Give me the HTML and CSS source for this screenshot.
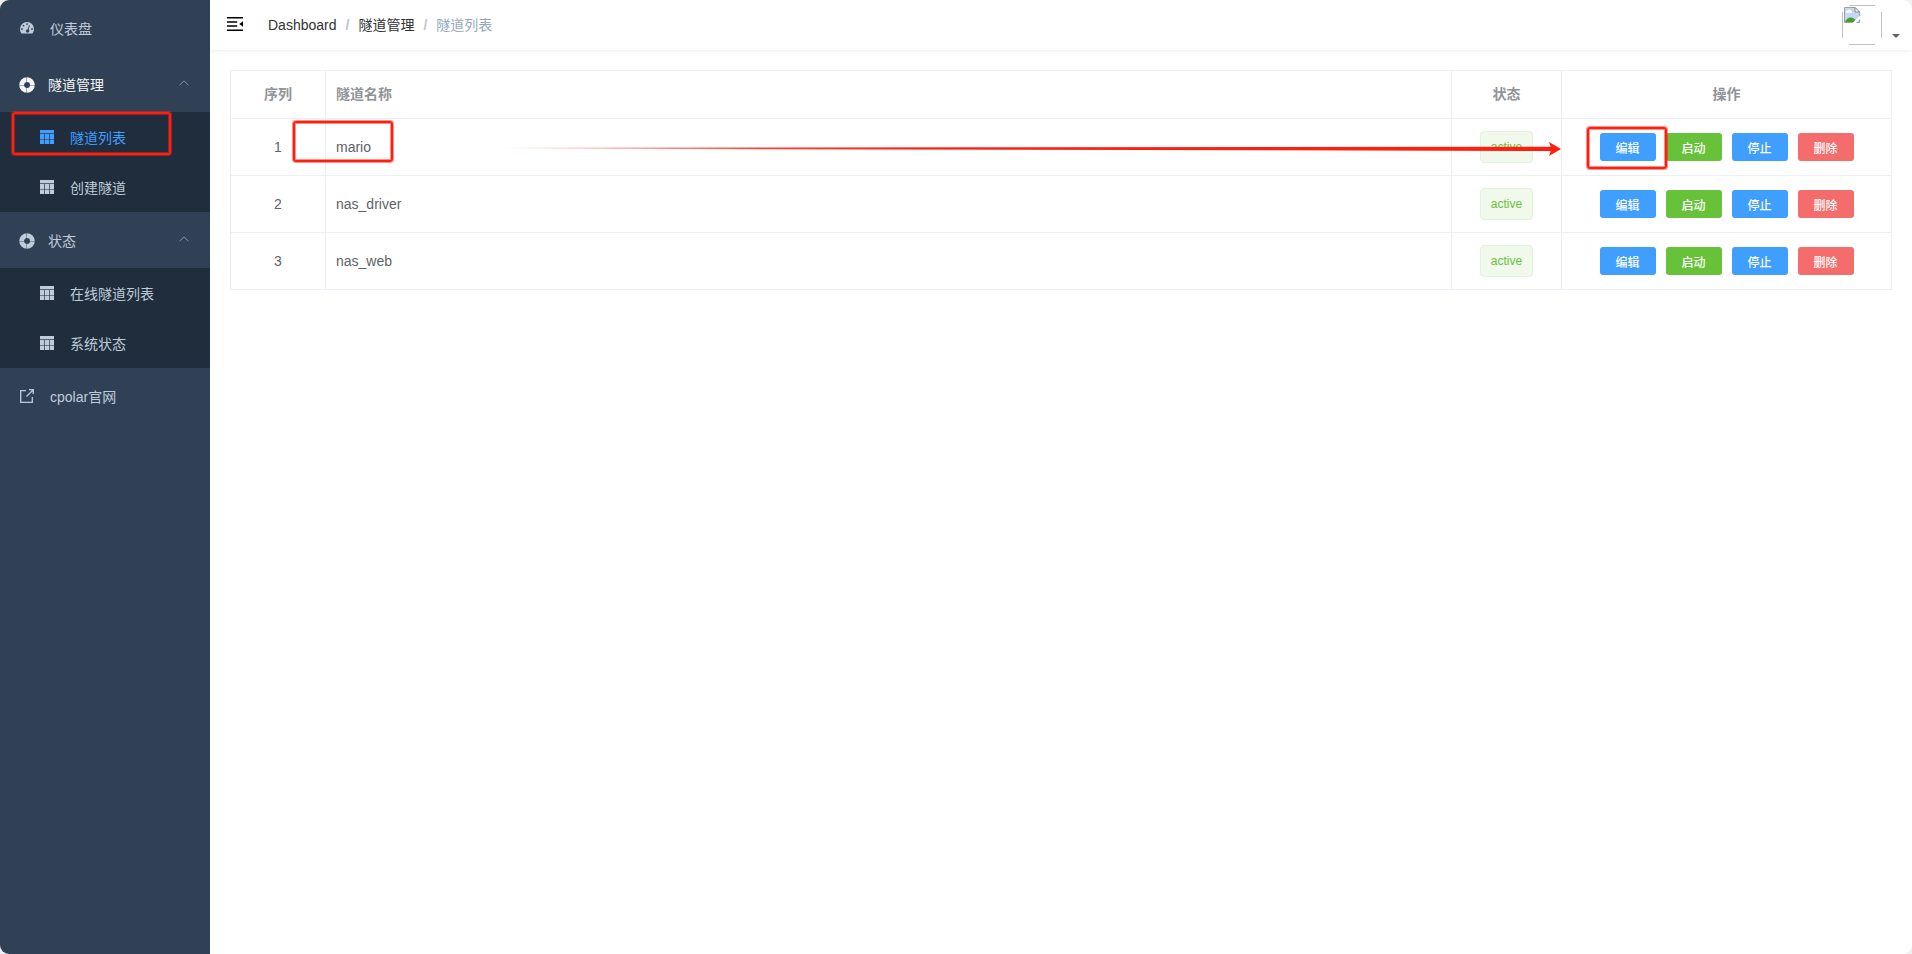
FILE: index.html
```
<!DOCTYPE html>
<html lang="zh-CN">
  <head>
    <meta charset="UTF-8" />
    <meta name="viewport" content="width=device-width, initial-scale=1.0" />
    <title>隧道列表</title>
    <link rel="stylesheet" href="styles.css" />
  </head>
  <body>
    <!-- shared icons -->
    <svg width="0" height="0" class="sprite">
      <symbol id="icon-table" viewBox="0 0 14 14">
        <path d="M0 0h14v14H0z" />
        <path d="M0 3.500h14M4.500 4v10M9.500 4v10" stroke="#1f2d3d" opacity=".65" />
        <path d="M0 9.500h14" stroke="#1f2d3d" opacity=".5" />
      </symbol>
      <symbol id="icon-ring" viewBox="0 0 16 16">
        <circle cx="8" cy="8" r="5.400" fill="none" stroke="currentColor" stroke-width="4.800" />
        <path d="M7.500 0v5M7.500 11v5M0 8.500h5M11 8.500h5" stroke="#304156" opacity=".4" />
      </symbol>
      <symbol id="icon-up" viewBox="0 0 12 12">
        <path d="M1.500 8.300 6 3.800l4.500 4.500" fill="none" stroke="currentColor" />
      </symbol>
    </svg>

    <div class="app">
      <aside class="sidebar">
        <div class="menu-item">
          <svg class="icon" viewBox="0 0 14 12">
            <path fill-rule="evenodd" d="M7 0a7 7 0 0 0-7 7c0 1.500.4 2.900 1.200 4.100.1.200.3.300.5.300h10.600c.2 0 .4-.1.5-.3A7.400 7.400 0 0 0 14 7a7 7 0 0 0-7-7zM7 1.200a.9.900 0 1 1 0 1.800.9.900 0 0 1 0-1.800zM3.500 2.700a.9.900 0 1 1 0 1.800.9.900 0 0 1 0-1.800zM2 6.100a.9.900 0 1 1 0 1.800.9.900 0 0 1 0-1.800zM12 6.100a.9.900 0 1 1 0 1.800.9.900 0 0 1 0-1.800zM9.100 3.100l.8.300-1.300 4.200a1.700 1.700 0 1 1-.9-.3z" />
          </svg>
          <span>仪表盘</span>
        </div>
        <div class="submenu-title open">
          <svg class="icon-ring"><use href="#icon-ring" /></svg>
          <span>隧道管理</span>
          <svg class="arrow"><use href="#icon-up" /></svg>
        </div>
        <div class="submenu">
          <div class="submenu-item active">
            <svg class="icon"><use href="#icon-table" /></svg>
            <span>隧道列表</span>
          </div>
          <div class="submenu-item">
            <svg class="icon"><use href="#icon-table" /></svg>
            <span>创建隧道</span>
          </div>
        </div>
        <div class="submenu-title">
          <svg class="icon-ring"><use href="#icon-ring" /></svg>
          <span>状态</span>
          <svg class="arrow"><use href="#icon-up" /></svg>
        </div>
        <div class="submenu">
          <div class="submenu-item">
            <svg class="icon"><use href="#icon-table" /></svg>
            <span>在线隧道列表</span>
          </div>
          <div class="submenu-item">
            <svg class="icon"><use href="#icon-table" /></svg>
            <span>系统状态</span>
          </div>
        </div>
        <div class="menu-item">
          <svg class="icon" viewBox="0 0 14 14">
            <path d="M6 1.700H.7v11.600h11.600V8M6.500 7.500l6.300-6.300M9 .7h4.300V5" fill="none" stroke="currentColor" stroke-width="1.300" />
          </svg>
          <span>cpolar官网</span>
        </div>
      </aside>

      <div class="main">
        <header class="navbar">
          <svg class="hamburger" viewBox="0 0 16 14">
            <path d="M0 0h16v1.500H0zM0 4.200h10.200v1.500H0zM0 8.300h10.200v1.500H0zM0 12.500h16V14H0zM16 4.300v5.400L12.300 7z" />
          </svg>
          <div class="breadcrumb">
            <a>Dashboard</a><i>/</i><a>隧道管理</a><i>/</i><span>隧道列表</span>
          </div>
          <div class="user">
            <!-- avatar that failed to load -->
            <svg class="avatar" viewBox="0 0 40 40">
              <path d="M7 .5h26M7 39.500h26M.5 7v26M39.500 7v26" stroke="#c0c0c0" />
              <path d="M2.500 2.500h10.500l4.500 4.500v10.500h-15z" fill="#c6d7f6" stroke="#a0a0a0" />
              <path d="M13 2.500V7h4.500z" fill="#fff" stroke="#8a8a8a" />
              <path d="M4.500 8a1.500 1.500 0 0 1 1-2.600 2 2 0 0 1 3.600.4A1.200 1.200 0 0 1 9.500 8z" fill="#fff" />
              <path d="M3 17c1-3 4-5 6.500-4.500S14 15 15 17z" fill="#43a02c" />
              <path d="M10 18.500 18.500 10v3.500l-5 5z" fill="#fff" />
            </svg>
            <div class="caret"></div>
          </div>
        </header>

        <section class="content">
          <table class="tunnel-table">
            <colgroup>
              <col class="col-index" />
              <col />
              <col class="col-status" />
              <col class="col-action" />
            </colgroup>
            <tr>
              <th>序列</th>
              <th class="name">隧道名称</th>
              <th>状态</th>
              <th>操作</th>
            </tr>
            <tr>
              <td>1</td>
              <td class="name">mario</td>
              <td><div class="tag">active</div></td>
              <td>
                <div class="actions">
                  <button class="btn primary">编辑</button>
                  <button class="btn success">启动</button>
                  <button class="btn primary">停止</button>
                  <button class="btn danger">删除</button>
                </div>
              </td>
            </tr>
            <tr>
              <td>2</td>
              <td class="name">nas_driver</td>
              <td><div class="tag">active</div></td>
              <td>
                <div class="actions">
                  <button class="btn primary">编辑</button>
                  <button class="btn success">启动</button>
                  <button class="btn primary">停止</button>
                  <button class="btn danger">删除</button>
                </div>
              </td>
            </tr>
            <tr>
              <td>3</td>
              <td class="name">nas_web</td>
              <td><div class="tag">active</div></td>
              <td>
                <div class="actions">
                  <button class="btn primary">编辑</button>
                  <button class="btn success">启动</button>
                  <button class="btn primary">停止</button>
                  <button class="btn danger">删除</button>
                </div>
              </td>
            </tr>
          </table>
        </section>
      </div>
    </div>

    <!-- red marks over the page -->
    <div class="mark mark-menu"></div>
    <div class="mark mark-name"></div>
    <div class="mark mark-edit"></div>
    <svg class="mark-arrow" viewBox="0 0 1064 16">
      <defs>
        <linearGradient id="fade" x1="0" x2="1">
          <stop offset="0" stop-color="#ff1f0f" stop-opacity="0" />
          <stop offset=".25" stop-color="#ff1f0f" stop-opacity=".85" />
          <stop offset=".4" stop-color="#ff1f0f" />
        </linearGradient>
      </defs>
      <path d="M0 7.600 1052 6.800v4.200L0 8.600z" fill="url(#fade)" />
      <path d="M1049 2 1061 9l-12 7 2.500-7z" fill="#ff1f0f" />
    </svg>
  </body>
</html>
```

FILE: styles.css
```
* {
  box-sizing: border-box;
}
body {
  margin: 0;
  background: #f0f0f0;
  font-family: "Liberation Sans", "Noto Sans CJK SC", sans-serif;
  font-size: 14px;
  color: #606266;
}
.sprite {
  position: absolute;
}
.app {
  display: flex;
  height: 954px;
  border-radius: 9px;
  overflow: hidden;
  background: #fff;
}

/* sidebar */
.sidebar {
  width: 210px;
  background: #304156;
  color: #bfcbd9;
}
.sidebar svg {
  fill: currentColor;
}
.menu-item,
.submenu-title {
  display: flex;
  align-items: center;
  height: 56px;
  padding: 0 20px;
}
.submenu-title {
  padding-left: 19px;
}
.submenu-title.open {
  color: #f4f4f5;
}
.icon {
  width: 14px;
  height: 14px;
  margin-right: 16px;
}
.submenu-item .icon {
  margin-bottom: 1px;
}
.icon-ring {
  width: 16px;
  height: 16px;
  margin: 2px 13px 0 0;
}
.arrow {
  width: 12px;
  height: 12px;
  margin: 0 0 3px auto;
  color: #909399;
}
.submenu {
  background: #1f2d3d;
}
.submenu-item {
  display: flex;
  align-items: center;
  height: 50px;
  padding-left: 40px;
}
.submenu-item.active {
  color: #409eff;
}

/* top bar */
.main {
  flex: 1;
}
.navbar {
  display: flex;
  align-items: center;
  height: 50px;
  padding: 0 12px 0 17px;
  box-shadow: 0 1px 4px rgba(0, 21, 41, 0.08);
}
.hamburger {
  width: 16px;
  height: 14px;
  margin: 0 25px 2px 0;
}
.breadcrumb {
  padding-bottom: 2px;
  color: #97a8be;
}
.breadcrumb a {
  color: #303133;
}
.breadcrumb i {
  margin: 0 9px;
  font-style: normal;
  font-weight: bold;
  color: #c0c4cc;
}
.user {
  display: flex;
  align-items: flex-end;
  margin-left: auto;
}
.avatar {
  width: 40px;
  height: 40px;
}
.caret {
  margin: 0 0 7px 10px;
  border: 4px solid transparent;
  border-top-color: #5a5e66;
  border-bottom: 0;
}

/* table */
.content {
  padding: 20px;
}
.tunnel-table {
  width: 1662px;
  table-layout: fixed;
  border-spacing: 0;
  border-top: 1px solid #ebeef5;
  border-left: 1px solid #ebeef5;
}
.col-index {
  width: 95px;
}
.col-status {
  width: 110px;
}
.col-action {
  width: 330px;
}
th,
td {
  height: 57px;
  padding: 0 10px;
  border-right: 1px solid #ebeef5;
  border-bottom: 1px solid #ebeef5;
  text-align: center;
}
th {
  height: 48px;
  padding-bottom: 3px;
  color: #909399;
}
.name {
  text-align: left;
}
.tag {
  display: inline-block;
  height: 32px;
  padding: 0 10px;
  border: 1px solid #e1f3d8;
  border-radius: 4px;
  background: #f0f9eb;
  color: #67c23a;
  font-size: 12px;
  line-height: 30px;
  vertical-align: middle;
}
.actions {
  display: flex;
  justify-content: center;
  gap: 10px;
}
.btn {
  width: 56px;
  height: 28px;
  padding: 0;
  border: 0;
  border-radius: 3px;
  color: #fff;
  font-family: inherit;
  font-size: 12px;
  font-weight: 500;
}
.primary {
  background: #409eff;
}
.success {
  background: #67c23a;
}
.danger {
  background: #f56c6c;
}

/* marks */
.mark {
  position: absolute;
  border: 2px solid #ff1f0f;
  border-radius: 3px;
  box-shadow: 0 0 0 1px rgba(255, 31, 15, 0.5), inset 0 0 0 1px rgba(255, 31, 15, 0.5);
}
.mark-menu {
  left: 12px;
  top: 112px;
  width: 159px;
  height: 43px;
}
.mark-name {
  left: 293px;
  top: 121px;
  width: 100px;
  height: 41px;
}
.mark-edit {
  left: 1587px;
  top: 127px;
  width: 80px;
  height: 42px;
}
.mark-arrow {
  position: absolute;
  left: 500px;
  top: 140px;
  width: 1064px;
  height: 16px;
}
```
